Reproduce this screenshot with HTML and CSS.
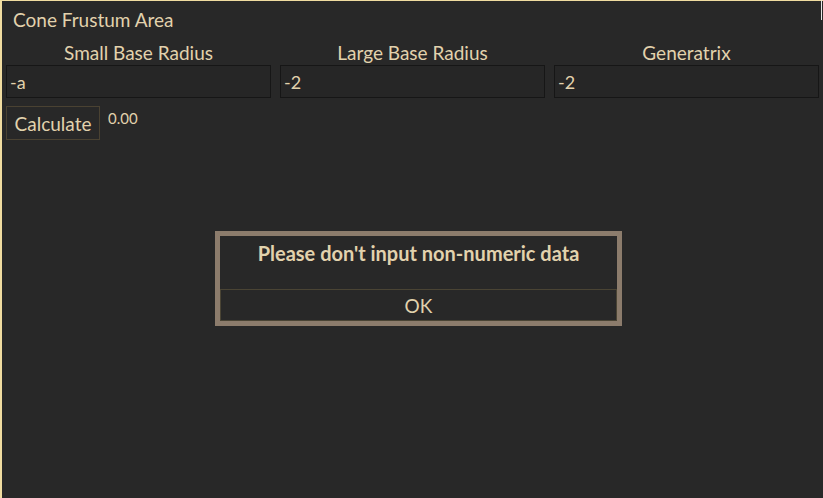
FILE: index.html
```html
<!DOCTYPE html>
<html>
<head>
<meta charset="utf-8">
<link rel="stylesheet" href="styles.css">
</head>
<body>
<div class="app">
  <div class="title">Cone Frustum Area</div>
  <div class="fields">
    <div class="field">
      <label class="label">Small Base Radius</label>
      <input class="input" type="text" value="-a">
    </div>
    <div class="field">
      <label class="label">Large Base Radius</label>
      <input class="input" type="text" value="-2">
    </div>
    <div class="field">
      <label class="label">Generatrix</label>
      <input class="input" type="text" value="-2">
    </div>
  </div>
  <div class="actions">
    <button class="btn">Calculate</button>
    <span class="result">0.00</span>
  </div>
</div>
<div class="dialog">
  <div class="dialog-msg">Please don't input non-numeric data</div>
  <button class="dialog-ok">OK</button>
</div>
<div class="corner"></div>
</body>
</html>
```

FILE: styles.css
```css
html, body {
  margin: 0;
  padding: 0;
  height: 100%;
  background: #282828;
}
body {
  font-family: "Lato", "Open Sans", sans-serif;
  color: #e2d2ad;
  overflow: hidden;
}
.app {
  box-sizing: border-box;
  height: 498px;
  border-left: 2px solid #f0dca0;
  border-top: 1px solid #f0dca0;
  padding: 0 4px 0 4px;
}
.title {
  font-size: 19px;
  padding: 7px 0 0 7px;
  height: 33px;
  box-sizing: border-box;
}
.fields {
  display: grid;
  grid-template-columns: 265px 265px 265px;
  column-gap: 9px;
}
.field {
  display: flex;
  flex-direction: column;
  align-items: stretch;
}
.label {
  text-align: center;
  font-size: 19px;
  height: 31px;
  line-height: 38px;
}
.input {
  box-sizing: border-box;
  height: 33px;
  margin: 0;
  background: #262626;
  border: 1px solid #161616;
  color: #e2d2ad;
  font-family: inherit;
  font-size: 18px;
  padding: 0 3px;
  outline: none;
}
.actions {
  display: flex;
  align-items: flex-start;
  margin-top: 8px;
  gap: 8px;
}
.btn {
  box-sizing: border-box;
  height: 34px;
  width: 94px;
  background: #282828;
  border: 1px solid #4a4232;
  color: #e2d2ad;
  font-family: inherit;
  font-size: 19px;
  padding: 0;
}
.result {
  font-size: 15px;
  line-height: 24px;
}
.dialog {
  position: absolute;
  left: 215px;
  top: 231px;
  width: 407px;
  height: 95px;
  box-sizing: border-box;
  border: 5px solid #8c7c6c;
  background: #282828;
  display: flex;
  flex-direction: column;
}
.dialog-msg {
  height: 53px;
  text-align: center;
  font-weight: bold;
  font-size: 20px;
  line-height: 34px;
}
.dialog-ok {
  flex: 1;
  margin: 0;
  background: #282828;
  border: 1px solid #4a4434;
  color: #e2d2ad;
  font-family: inherit;
  font-size: 19px;
  padding: 0;
}
.corner {
  position: absolute;
  right: 1px;
  top: 0;
  width: 1px;
  height: 20px;
  background: #e8e8e8;
}
```
